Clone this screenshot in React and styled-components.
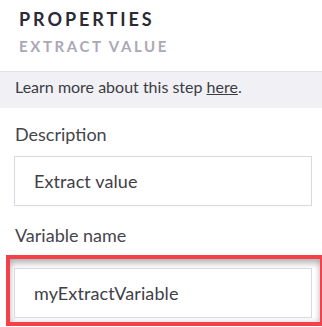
import React from 'react';
import styled, { createGlobalStyle } from 'styled-components';

const GlobalStyle = createGlobalStyle`
  body {
    margin: 0;
    background: #fff;
    font-family: Lato, "Open Sans", sans-serif;
    color: #444450;
  }
`;

export const Panel = styled.div`
  width: 322px;
  height: 327px;
  overflow: hidden;
  display: flex;
  flex-direction: column;
`;

export const Header = styled.div`
  height: 71px;
  box-sizing: border-box;
  padding: 8px 0 0 19px;
`;

export const Title = styled.div`
  font-size: 18px;
  font-weight: 700;
  letter-spacing: 2.95px;
  color: #2b2a35;
  line-height: 22px;
`;

export const Subtitle = styled.div`
  margin-top: 7px;
  font-size: 15px;
  font-weight: 700;
  letter-spacing: 2.6px;
  color: #aaa8b6;
  line-height: 18px;
`;

export const InfoBar = styled.div`
  height: 37px;
  box-sizing: border-box;
  border-top: 1px solid #e2e1e9;
  background: #f1f1f5;
  padding: 5px 0 0 15px;
  font-size: 16px;
  line-height: 20px;
  color: #3c3c44;
  a {
    color: inherit;
    text-decoration: underline;
  }
`;

export const Field = styled.div`
  display: flex;
  flex-direction: column;
  padding: 0 10px 0 14px;
  margin-top: ${p => p.$top}px;
`;

export const Label = styled.div`
  padding-left: 1px;
  font-size: 18px;
  line-height: 22px;
  color: #45454d;
  margin-bottom: ${p => p.$gap}px;
`;

export const InputBox = styled.div`
  height: 50px;
  box-sizing: border-box;
  border: 1px solid #d9d8e3;
  background: #fff;
  display: flex;
  align-items: center;
  padding-left: 19px;
  font-size: 18px;
  letter-spacing: 0.1px;
  color: #3f3f47;
`;

export const Highlight = styled.div`
  margin: 0 -12px 0 -8px;
  padding: 9px 8px 4px 4px;
  border: 4px solid #f4404a;
  box-shadow: inset 0 6px 6px -1px rgba(0, 0, 0, 0.22), inset 0 0 6px rgba(0, 0, 0, 0.18);
`;

const App = () => (
  <>
    <GlobalStyle />
    <Panel>
      <Header>
        <Title>PROPERTIES</Title>
        <Subtitle>EXTRACT VALUE</Subtitle>
      </Header>
      <InfoBar>
        Learn more about this step <a href="#">here</a>.
      </InfoBar>
      <Field $top={15}>
        <Label $gap={11}>Description</Label>
        <InputBox>Extract value</InputBox>
      </Field>
      <Field $top={18}>
        <Label $gap={9}>Variable name</Label>
        <Highlight>
          <InputBox>myExtractVariable</InputBox>
        </Highlight>
      </Field>
    </Panel>
  </>
);

export default App;
